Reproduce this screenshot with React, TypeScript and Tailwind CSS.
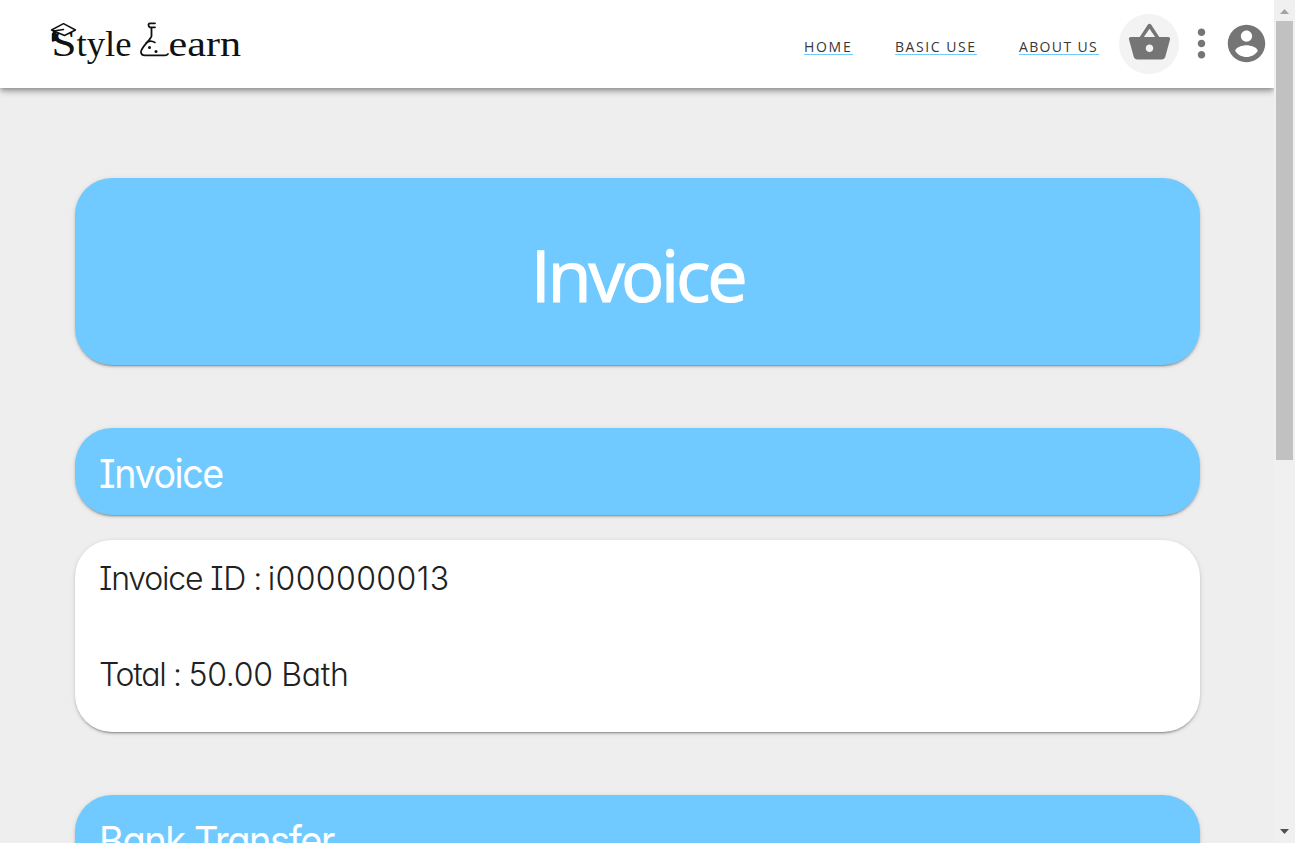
import React from "react";

const cardShadow =
  "shadow-[0_3px_1px_-2px_rgba(0,0,0,0.2),0_2px_2px_0_rgba(0,0,0,0.14),0_1px_5px_0_rgba(0,0,0,0.12)]";
const hand =
  "font-['Inter',sans-serif] [font-feature-settings:'cv08','cv11'] whitespace-nowrap";

function Icon({ d }: { d: string }) {
  return (
    <svg viewBox="0 0 24 24" className="h-[45px] w-[45px] shrink-0" fill="#757575">
      <path d={d} />
    </svg>
  );
}

function Logo() {
  return (
    <svg width="200" height="50" viewBox="0 0 200 50" className="shrink-0" aria-label="Style Learn">
      <g fill="#111" fontFamily="'Liberation Serif', serif">
        <text x="2.500" y="37" fontSize="38" textLength="25" lengthAdjust="spacingAndGlyphs">S</text>
        <text x="27.500" y="37" fontSize="35" textLength="55" lengthAdjust="spacingAndGlyphs">tyle</text>
        <text x="119.500" y="37" fontSize="35" textLength="72.500" lengthAdjust="spacingAndGlyphs">earn</text>
      </g>
      <g fill="none" stroke="#111" strokeWidth="1.5" strokeLinejoin="round" strokeLinecap="round">
        <path d="M2.500 11 14.500 4.700 26.500 11 15.500 16.500Z" fill="#fff" />
        <path d="M14.500 10.500 4.500 12V20" />
        <path d="M4 15V21.500M6 13V21" strokeWidth="2.400" />
        <path d="M106 4.300H101Q99.500 4.300 99.500 6T101 8.300H106M102.500 8.500V17C102.500 20 92 28 92 33Q92 36.300 96 36.300H116Q118 36.300 119 35" strokeWidth="1.800" />
        <path d="M97 24Q101 20.500 106 23.500" />
      </g>
      <circle cx="100.500" cy="28.500" r="1.500" fill="#111" />
      <circle cx="107" cy="32.500" r="1.500" fill="#111" />
    </svg>
  );
}

function NavLink({ children, className }: { children: React.ReactNode; className: string }) {
  return (
    <a
      className={`border-b border-[#70caff] font-['Open_Sans',sans-serif] text-[14px] leading-[15px] font-normal whitespace-nowrap text-[#383838] ${className}`}
    >
      {children}
    </a>
  );
}

export default function App() {
  return (
    <div className="flex h-[843px] w-full overflow-hidden bg-[#eeeeee]">
      <div className="flex min-w-0 flex-1 flex-col overflow-hidden">
        <header className="z-10 flex h-[88px] shrink-0 items-center bg-white pr-[5px] pb-[1px] pl-[49px] shadow-[0_2px_4px_-1px_rgba(0,0,0,0.2),0_4px_5px_0_rgba(0,0,0,0.14),0_1px_10px_0_rgba(0,0,0,0.12),0_2px_8px_0_rgba(0,0,0,0.1)]">
          <Logo />
          <nav className="mt-[7px] ml-auto flex">
            <NavLink className="mr-[42px] w-[49px] tracking-[1.700px]">HOME</NavLink>
            <NavLink className="mr-[42px] w-[82px] tracking-[1.550px]">BASIC USE</NavLink>
            <NavLink className="mr-[20px] w-[80px] tracking-[1.350px]">ABOUT US</NavLink>
          </nav>
          <div className="flex h-[60px] w-[60px] items-center justify-center rounded-full bg-[#f3f3f3] pb-[2px]">
            <Icon d="M17.210 9l-4.380-6.560c-.19-.28-.51-.42-.83-.42-.32 0-.64.14-.83.43L6.790 9H2c-.55 0-1 .45-1 1 0 .09.010.18.040.27l2.540 9.270c.23.84 1 1.460 1.920 1.460h13c.92 0 1.690-.62 1.930-1.460l2.540-9.270L23 10c0-.55-.45-1-1-1h-4.790zM9 9l3-4.400L15 9H9zm3 8c-1.100 0-2-.9-2-2s.9-2 2-2 2 .9 2 2-.9 2-2 2z" />
          </div>
          <div className="flex pb-px">
            <Icon d="M12 8c1.100 0 2-.9 2-2s-.9-2-2-2-2 .9-2 2 .9 2 2 2zm0 2c-1.100 0-2 .9-2 2s.9 2 2 2 2-.9 2-2-.9-2-2-2zm0 6c-1.100 0-2 .9-2 2s.9 2 2 2 2-.9 2-2-.9-2-2-2z" />
            <Icon d="M12 2C6.480 2 2 6.480 2 12s4.480 10 10 10 10-4.480 10-10S17.520 2 12 2zm0 3c1.660 0 3 1.340 3 3s-1.340 3-3 3-3-1.340-3-3 1.340-3 3-3zm0 14.200c-2.500 0-4.710-1.280-6-3.220.03-1.990 4-3.080 6-3.080 1.990 0 5.970 1.090 6 3.080-1.290 1.940-3.500 3.220-6 3.220z" />
          </div>
        </header>

        <main className="flex flex-col pt-[90px] pr-[74px] pl-[75px]">
          <section className={`flex h-[187px] shrink-0 items-center justify-center rounded-[37px] bg-[#70caff] pt-[4px] ${cardShadow}`}>
            <h1 className="font-['Open_Sans',sans-serif] text-[72px] leading-[96px] font-normal tracking-[-3.300px] text-white [-webkit-text-stroke:1.200px_white]">
              Invoice
            </h1>
          </section>

          <section className={`mt-[63px] flex h-[87px] shrink-0 items-center rounded-[37px] bg-[#70caff] px-[24px] pt-[4px] ${cardShadow}`}>
            <h2 className={`origin-left scale-x-[0.940] text-[40px] leading-[60px] font-normal tracking-[-1.500px] text-white ${hand}`}>Invoice</h2>
          </section>

          <section className={`mt-[25px] flex h-[192px] shrink-0 flex-col rounded-[37px] bg-white px-[24px] pt-[15px] text-[32px] leading-[48px] font-light text-[#212121] ${cardShadow}`}>
            <p className={`tracking-[-0.300px] ${hand}`}>
              <span className="tracking-[-1.200px]">Invoice </span>
              <span>ID</span>
              <span className="tracking-[-1.800px]"> : </span>
              <span className="tracking-[0.400px]">i000000013</span>
            </p>
            <p className={`mt-[48px] tracking-[-0.300px] ${hand}`}>
              <span className="tracking-[-1.300px]">Total : </span>
              <span>50.00 Bath</span>
            </p>
          </section>

          <section className={`mt-[63px] flex h-[87px] shrink-0 items-center rounded-[37px] bg-[#70caff] px-[24px] pt-[4px] ${cardShadow}`}>
            <h2 className={`origin-left scale-x-[0.950] text-[40px] leading-[60px] font-normal tracking-[-1.500px] text-white ${hand}`}>Bank Transfer</h2>
          </section>
        </main>
      </div>

      <aside className="flex w-[21px] shrink-0 flex-col items-center bg-[#f0f0f0]">
        <svg className="h-[21px] w-[21px] shrink-0" viewBox="0 0 21 21">
          <path d="M6 14h9l-4.500-5z" fill="#a3a3a3" />
        </svg>
        <div className="h-[439px] w-[17px] bg-[#c1c1c1]" />
        <svg className="mt-auto h-[21px] w-[21px] shrink-0" viewBox="0 0 21 21">
          <path d="M6 7h9l-4.500 5z" fill="#505050" />
        </svg>
      </aside>
    </div>
  );
}
